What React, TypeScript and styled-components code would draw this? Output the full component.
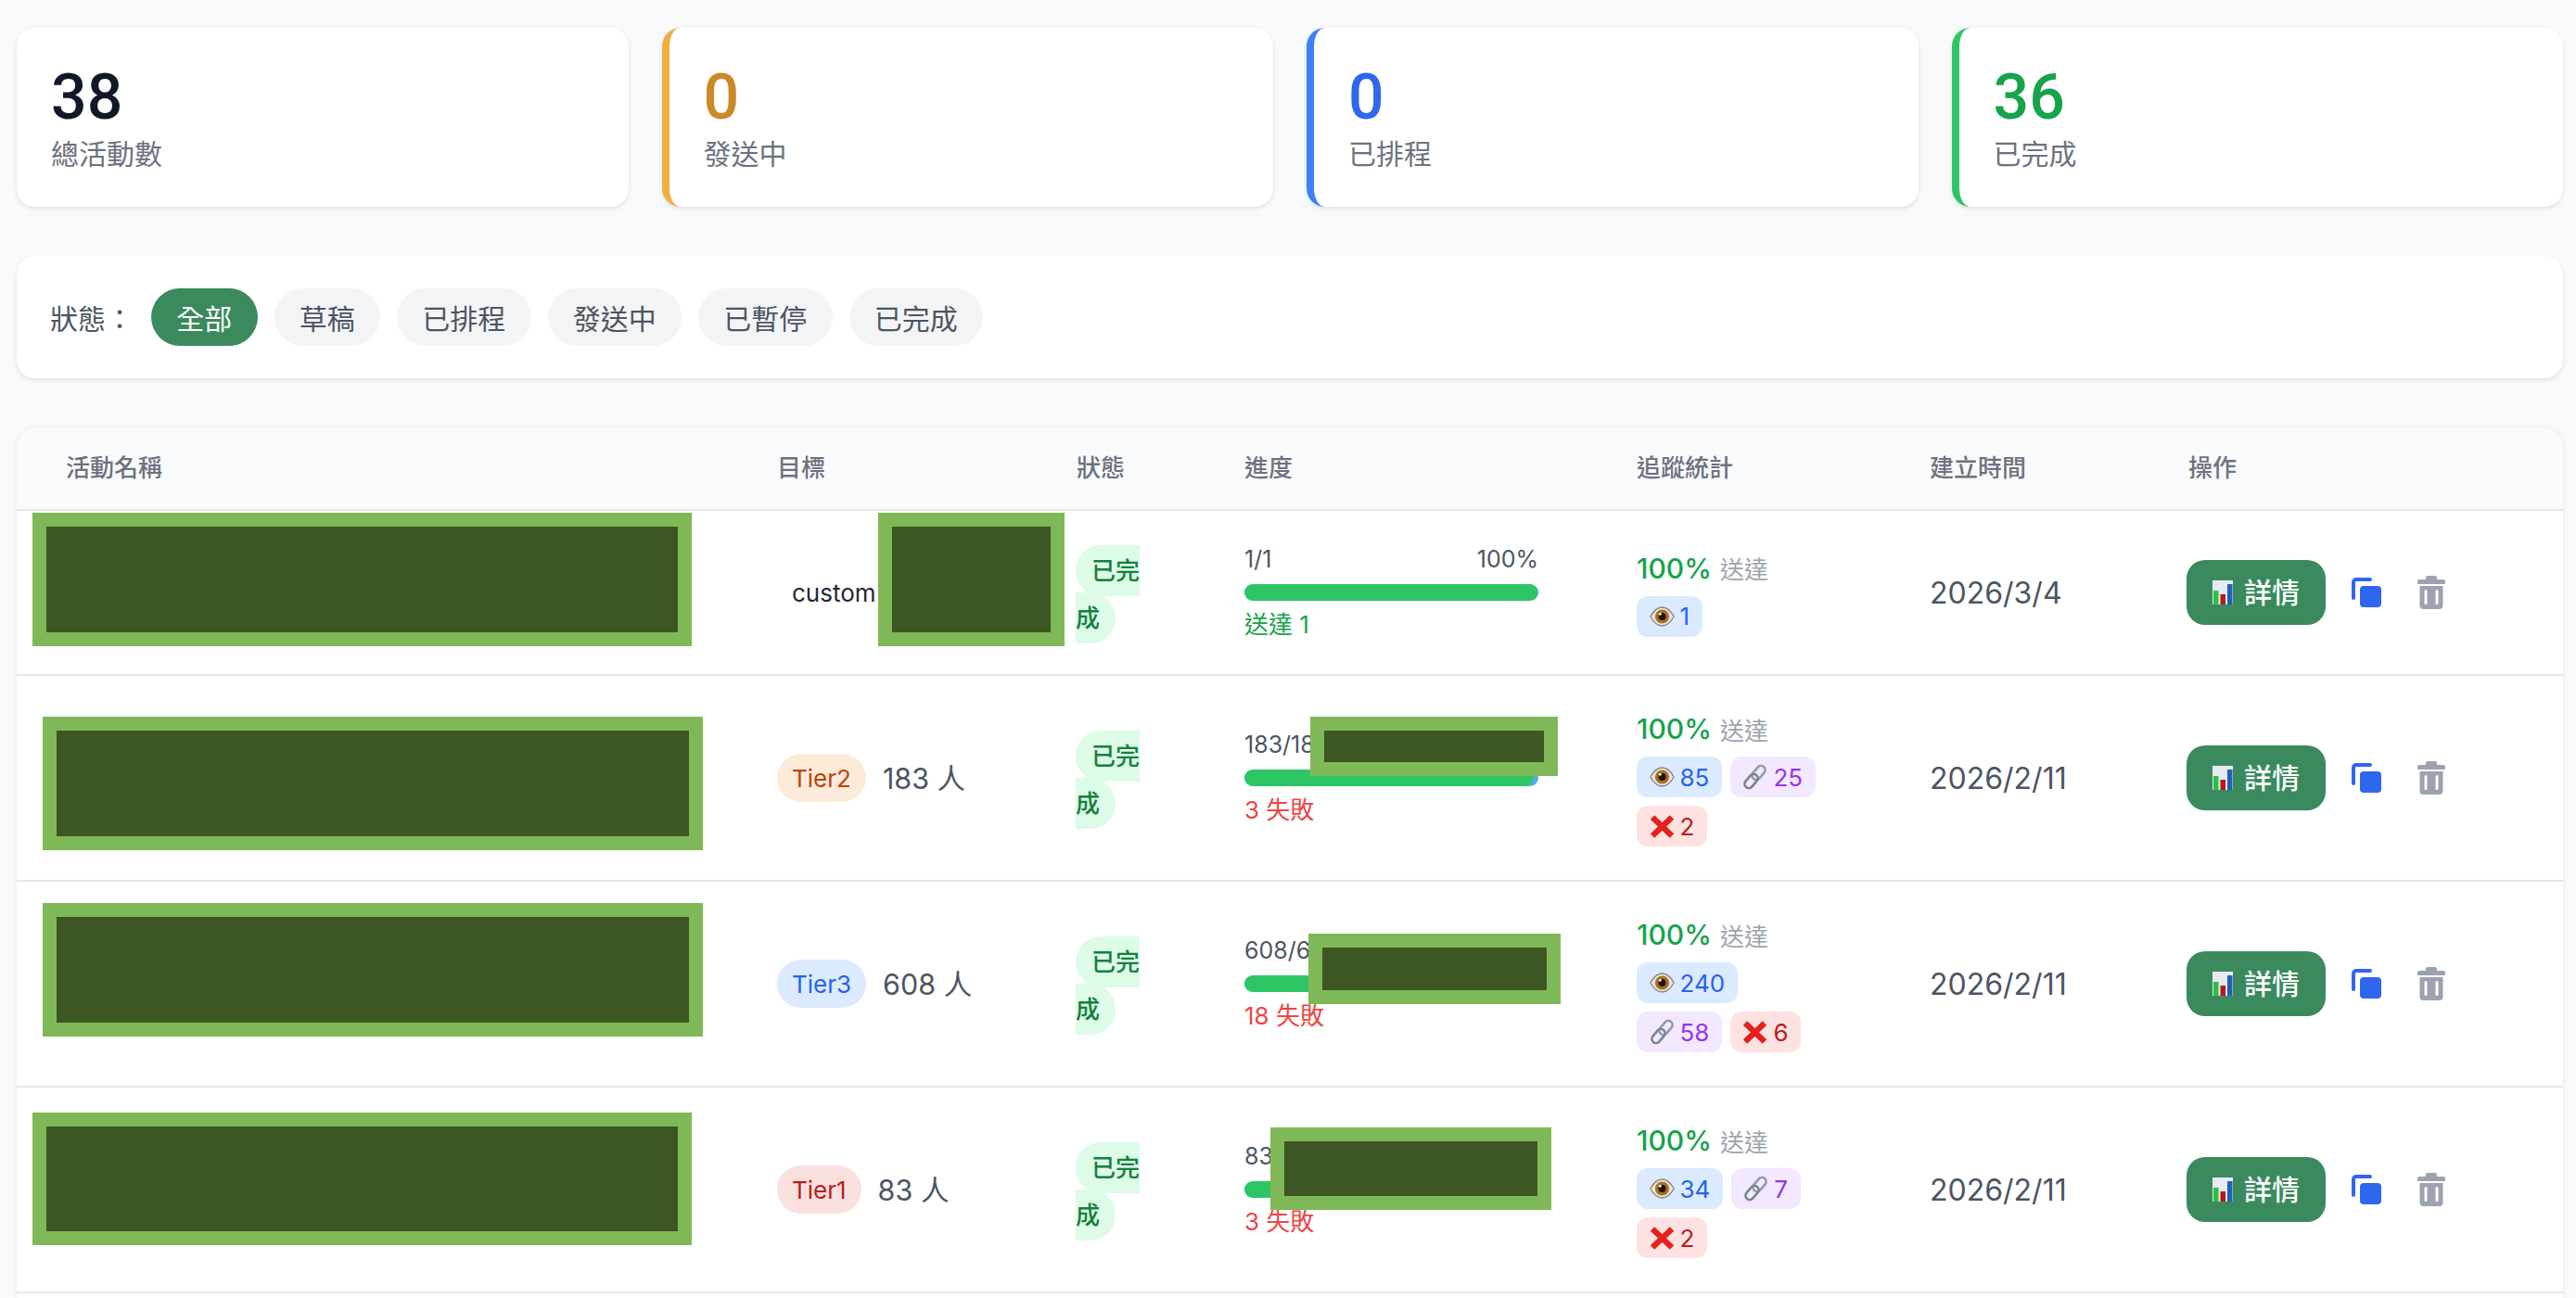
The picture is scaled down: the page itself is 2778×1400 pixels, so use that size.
import React from 'react';
import styled, { createGlobalStyle } from 'styled-components';

type Tone = 'green' | 'red';
type Box = { x: number; y: number; w: number; h: number };
type Campaign = {
  tier?: string;
  tierText?: string;
  tierBg?: string;
  target: string;
  sent: string;
  percent: string;
  note: string;
  noteTone: Tone;
  fill: number;
  opens: number;
  clicks?: number;
  fails?: number;
  date: string;
  height: number;
  masks: Box[];
};

const GlobalStyle = createGlobalStyle`
  html, body, #root { margin: 0; padding: 0; height: 100%; }
  body {
    background: #f8f9fa;
    color: #1f2937;
    font-family: Inter, "Noto Sans CJK TC", sans-serif;
    overflow: hidden;
  }
`;

const Page = styled.div`
  height: 1400px;
  box-sizing: border-box;
  padding: 30px 14px 0 18px;
  display: flex;
  flex-direction: column;
  gap: 53px;
  overflow: hidden;
`;

const StatsGrid = styled.div`
  display: grid;
  grid-template-columns: repeat(4, 1fr);
  gap: 36px;
`;

const StatCard = styled.div<{ $accent?: string }>`
  height: 193px;
  box-sizing: border-box;
  padding: 37px 37px 0;
  background: #fff;
  border-radius: 20px;
  border-left: ${({ $accent }) => ($accent ? `8px solid ${$accent}` : 'none')};
  box-shadow: 0 2px 5px rgba(0, 0, 0, 0.1);
`;

const StatValue = styled.div<{ $color: string }>`
  font-family: Roboto, sans-serif;
  font-size: 68px;
  line-height: 76px;
  font-weight: 500;
  color: ${({ $color }) => $color};
`;

const StatLabel = styled.div`
  font-size: 30px;
  line-height: 47px;
  color: #6b7280;
`;

const FilterBar = styled.div`
  height: 132px;
  box-sizing: border-box;
  padding: 0 36px;
  display: flex;
  align-items: center;
  gap: 18px;
  background: #fff;
  border-radius: 20px;
  box-shadow: 0 2px 5px rgba(0, 0, 0, 0.1);
`;

const FilterLabel = styled.span`
  font-size: 30px;
  color: #4b5563;
  width: 91px;
`;

const FilterPill = styled.button<{ $active?: boolean }>`
  height: 62px;
  padding: 0 27.25px;
  border: none;
  border-radius: 31px;
  font-family: inherit;
  font-size: 30px;
  background: ${({ $active }) => ($active ? '#3b8a5e' : '#f3f4f6')};
  color: ${({ $active }) => ($active ? '#fff' : '#4b5563')};
`;

const TableCard = styled.div`
  flex: 1;
  background: #fff;
  border-radius: 22px 22px 0 0;
  box-shadow: 0 0 5px rgba(0, 0, 0, 0.08);
`;

const columns = '820px 323px 181px 423px 316px 279px 1fr';

const HeadRow = styled.div`
  display: grid;
  grid-template-columns: ${columns};
  align-items: center;
  height: 90px;
  padding-bottom: 6px;
  box-sizing: border-box;
  background: #f9fafb;
  border-bottom: 2px solid #e5e7eb;
  border-radius: 22px 22px 0 0;
`;

const HeadCell = styled.div<{ $first?: boolean }>`
  font-size: 26px;
  font-weight: 500;
  color: #6b7280;
  padding-left: ${({ $first }) => ($first ? '53px' : '0')};
`;

const Row = styled.div<{ $height: number }>`
  position: relative;
  display: grid;
  grid-template-columns: ${columns};
  align-items: center;
  height: ${({ $height }) => $height}px;
  box-sizing: border-box;
  border-bottom: 2px solid #e5e7eb;
`;

const Mask = styled.div<{ $box: Box }>`
  position: absolute;
  left: ${({ $box }) => $box.x}px;
  top: ${({ $box }) => $box.y}px;
  width: ${({ $box }) => $box.w}px;
  height: ${({ $box }) => $box.h}px;
  box-sizing: border-box;
  background: #3c5723;
  border: 15px solid #7fb957;
`;

const TargetCell = styled.div`
  display: flex;
  align-items: center;
  gap: 18px;
`;

const TierBadge = styled.span<{ $bg?: string; $color?: string }>`
  height: 52px;
  padding: 0 16px;
  display: inline-flex;
  align-items: center;
  border-radius: 26px;
  font-size: 26px;
  background: ${({ $bg }) => $bg || 'transparent'};
  color: ${({ $color }) => $color || '#1f2937'};
`;

const TargetCount = styled.span`
  font-size: 30.5px;
  padding-bottom: 3px;
  color: #4b5563;
`;

const StatusWrap = styled.div`
  width: 72px;
  line-height: 47px;
  padding-top: 7px;
  margin-left: -1px;
`;

const StatusChip = styled.span`
  padding: 12px 17px;
  border-radius: 28px;
  font-size: 26px;
  font-weight: 500;
  background: #dcfce7;
  color: #15803d;
`;

const ProgressBlock = styled.div`
  width: 317px;
  display: flex;
  flex-direction: column;
`;

const ProgressHead = styled.div`
  display: flex;
  justify-content: space-between;
  font-size: 25px;
  line-height: 32px;
  color: #4b5563;
  margin-bottom: 11px;
`;

const BarTrack = styled.div`
  height: 18px;
  border-radius: 9px;
  background: #60a5fa;
  overflow: hidden;
`;

const BarFill = styled.div`
  height: 100%;
  border-radius: 9px;
  background: #2ec665;
`;

const ProgressNote = styled.div<{ $tone: Tone }>`
  margin-top: 9px;
  font-size: 26px;
  line-height: 34px;
  color: ${({ $tone }) => ($tone === 'green' ? '#16a34a' : '#ef4444')};
`;

const TrackCell = styled.div`
  display: flex;
  flex-direction: column;
  gap: 9px;
`;

const RateLine = styled.div`
  display: flex;
  align-items: center;
  gap: 9px;
  height: 42px;
`;

const RateValue = styled.span`
  font-size: 30px;
  font-weight: 500;
  color: #16a34a;
`;

const RateLabel = styled.span`
  font-size: 26px;
  color: #9ca3af;
`;

const ChipRow = styled.div`
  display: flex;
  flex-wrap: wrap;
  gap: 9px;
  width: 200px;
`;

const chipTones = {
  open: { bg: '#dbeafe', color: '#2563eb' },
  click: { bg: '#f3e8ff', color: '#9333ea' },
  fail: { bg: '#fee2e2', color: '#b91c1c' },
};

const Chip = styled.span<{ $kind: keyof typeof chipTones }>`
  height: 44px;
  padding: 0 13.5px;
  display: inline-flex;
  align-items: center;
  gap: 6px;
  border-radius: 12px;
  font-size: 26px;
  background: ${({ $kind }) => chipTones[$kind].bg};
  color: ${({ $kind }) => chipTones[$kind].color};
`;

const DateCell = styled.div`
  font-size: 32px;
  color: #4b5563;
`;

const ActionCell = styled.div`
  display: flex;
  align-items: center;
  margin-left: -2px;
`;

const DetailButton = styled.button`
  width: 150px;
  height: 70px;
  border: none;
  border-radius: 20px;
  background: #3b8a5e;
  color: #fff;
  font-family: inherit;
  font-size: 30px;
  font-weight: 500;
  display: flex;
  align-items: center;
  justify-content: center;
  gap: 12px;
  padding: 0;
`;

const DetailText = styled.span`
  padding-bottom: 4px;
`;

const IconButton = styled.span<{ $gap: number }>`
  display: inline-flex;
  margin-left: ${({ $gap }) => $gap}px;
`;

const EyeIcon = () => (
  <svg width="27" height="22" viewBox="0 0 27 22">
    <path d="M0.800 11C5 3.500 9 1 13.500 1S22 3.500 26.200 11c-4.200 7.500-8.200 10-12.700 10S5 18.500 0.800 11z" fill="#e8e4df" stroke="#8a8580" strokeWidth="1.3" />
    <circle cx="13.5" cy="11" r="7.6" fill="#a9701f" />
    <circle cx="13.5" cy="11" r="4" fill="#201208" />
    <circle cx="11.3" cy="8.300" r="1.400" fill="#fff" />
  </svg>
);

const LinkIcon = () => (
  <svg width="27" height="28" viewBox="0 0 27 28" fill="none">
    <rect x="13" y="1" width="9" height="17" rx="4.5" transform="rotate(40 17.5 9.5)" stroke="#8f9da4" strokeWidth="2.6" />
    <rect x="5" y="10" width="9" height="17" rx="4.5" transform="rotate(40 9.5 18.5)" stroke="#77868d" strokeWidth="2.6" />
  </svg>
);

const CrossIcon = () => (
  <svg width="27" height="25" viewBox="0 0 27 25">
    <path d="M3 2.5l21 20M24 2.5l-21 20" stroke="#e5211b" strokeWidth="6.4" />
  </svg>
);

const ChartIcon = () => (
  <svg width="22" height="26" viewBox="0 0 22 26">
    <rect width="22" height="26" fill="#e6ebf2" />
    <rect x="1" y="11" width="5.5" height="15" fill="#27c23f" />
    <rect x="8.5" y="15" width="5.5" height="11" fill="#b8171c" />
    <rect x="16" y="4" width="5.5" height="22" fill="#2060b8" />
  </svg>
);

const CopyIcon = () => (
  <svg width="32" height="32" viewBox="0 0 32 32">
    <path d="M2 22V5a3 3 0 0 1 3-3h15" fill="none" stroke="#2f66f0" strokeWidth="4" strokeLinecap="round" />
    <rect x="9" y="9" width="23" height="23" rx="4" fill="#2f66f0" />
  </svg>
);

const TrashIcon = () => (
  <svg width="30" height="36" viewBox="0 0 30 36">
    <path
      fill="#9ca3af"
      fillRule="evenodd"
      d="M11 0h8a2 2 0 0 1 2 2v2h7a2 2 0 0 1 2 2v2a1 1 0 0 1-1 1H1a1 1 0 0 1-1-1V6a2 2 0 0 1 2-2h7V2a2 2 0 0 1 2-2zM2.500 11h25v21a4 4 0 0 1-4 4h-17a4 4 0 0 1-4-4zM9 15a1.500 1.500 0 0 0-1.500 1.500v13a1.500 1.500 0 0 0 3 0v-13A1.500 1.500 0 0 0 9 15zm12 0a1.500 1.500 0 0 0-1.500 1.500v13a1.500 1.500 0 0 0 3 0v-13A1.500 1.500 0 0 0 21 15z"
    />
  </svg>
);

const stats = [
  { value: '38', label: '總活動數', color: '#111827' },
  { value: '0', label: '發送中', color: '#ca8a2a', accent: '#eeb13f' },
  { value: '0', label: '已排程', color: '#2f66f0', accent: '#3b82f6' },
  { value: '36', label: '已完成', color: '#16a34a', accent: '#2ec665' },
];

const filters = ['全部', '草稿', '已排程', '發送中', '已暫停', '已完成'];
const headers = ['活動名稱', '目標', '狀態', '進度', '追蹤統計', '建立時間', '操作'];

const campaigns: Campaign[] = [
  {
    tier: 'custom',
    target: '',
    sent: '1/1',
    percent: '100%',
    note: '送達 1',
    noteTone: 'green',
    fill: 100,
    opens: 1,
    date: '2026/3/4',
    height: 178,
    masks: [
      { x: 17, y: 2, w: 711, h: 144 },
      { x: 929, y: 2, w: 201, h: 144 },
    ],
  },
  {
    tier: 'Tier2',
    tierText: '#c2410c',
    tierBg: '#fcebd9',
    target: '183 人',
    sent: '183/183',
    percent: '100%',
    note: '3 失敗',
    noteTone: 'red',
    fill: 98.4,
    opens: 85,
    clicks: 25,
    fails: 2,
    date: '2026/2/11',
    height: 222,
    masks: [
      { x: 28, y: 44, w: 712, h: 144 },
      { x: 1395, y: 44, w: 267, h: 64 },
    ],
  },
  {
    tier: 'Tier3',
    tierText: '#2563eb',
    tierBg: '#dbeafe',
    target: '608 人',
    sent: '608/608',
    percent: '100%',
    note: '18 失敗',
    noteTone: 'red',
    fill: 97,
    opens: 240,
    clicks: 58,
    fails: 6,
    date: '2026/2/11',
    height: 222,
    masks: [
      { x: 28, y: 23, w: 712, h: 144 },
      { x: 1393, y: 56, w: 272, h: 76 },
    ],
  },
  {
    tier: 'Tier1',
    tierText: '#b91c1c',
    tierBg: '#fbe0e0',
    target: '83 人',
    sent: '83/83',
    percent: '100%',
    note: '3 失敗',
    noteTone: 'red',
    fill: 96.4,
    opens: 34,
    clicks: 7,
    fails: 2,
    date: '2026/2/11',
    height: 222,
    masks: [
      { x: 17, y: 27, w: 711, h: 143 },
      { x: 1352, y: 43, w: 303, h: 89 },
    ],
  },
];

export default function App() {
  return (
    <>
      <GlobalStyle />
      <Page>
        <StatsGrid>
          {stats.map((s) => (
            <StatCard key={s.label} $accent={s.accent}>
              <StatValue $color={s.color}>{s.value}</StatValue>
              <StatLabel>{s.label}</StatLabel>
            </StatCard>
          ))}
        </StatsGrid>

        <FilterBar>
          <FilterLabel>狀態：</FilterLabel>
          {filters.map((f, i) => (
            <FilterPill key={f} $active={i === 0}>
              {f}
            </FilterPill>
          ))}
        </FilterBar>

        <TableCard>
          <HeadRow>
            {headers.map((h, i) => (
              <HeadCell key={h} $first={i === 0}>
                {h}
              </HeadCell>
            ))}
          </HeadRow>
          {campaigns.map((c) => (
            <Row key={c.sent} $height={c.height}>
              <div />
              <TargetCell>
                <TierBadge $bg={c.tierBg} $color={c.tierText}>
                  {c.tier}
                </TierBadge>
                {c.target && <TargetCount>{c.target}</TargetCount>}
              </TargetCell>
              <StatusWrap>
                <StatusChip>已完成</StatusChip>
              </StatusWrap>
              <ProgressBlock>
                <ProgressHead>
                  <span>{c.sent}</span>
                  <span>{c.percent}</span>
                </ProgressHead>
                <BarTrack>
                  <BarFill style={{ width: `${c.fill}%` }} />
                </BarTrack>
                <ProgressNote $tone={c.noteTone}>{c.note}</ProgressNote>
              </ProgressBlock>
              <TrackCell>
                <RateLine>
                  <RateValue>100%</RateValue>
                  <RateLabel>送達</RateLabel>
                </RateLine>
                <ChipRow>
                  <Chip $kind="open">
                    <EyeIcon />
                    {c.opens}
                  </Chip>
                  {c.clicks !== undefined && (
                    <Chip $kind="click">
                      <LinkIcon />
                      {c.clicks}
                    </Chip>
                  )}
                  {c.fails !== undefined && (
                    <Chip $kind="fail">
                      <CrossIcon />
                      {c.fails}
                    </Chip>
                  )}
                </ChipRow>
              </TrackCell>
              <DateCell>{c.date}</DateCell>
              <ActionCell>
                <DetailButton>
                  <ChartIcon />
                  <DetailText>詳情</DetailText>
                </DetailButton>
                <IconButton $gap={28}>
                  <CopyIcon />
                </IconButton>
                <IconButton $gap={39}>
                  <TrashIcon />
                </IconButton>
              </ActionCell>
              {c.masks.map((m) => (
                <Mask key={m.x} $box={m} />
              ))}
            </Row>
          ))}
        </TableCard>
      </Page>
    </>
  );
}
